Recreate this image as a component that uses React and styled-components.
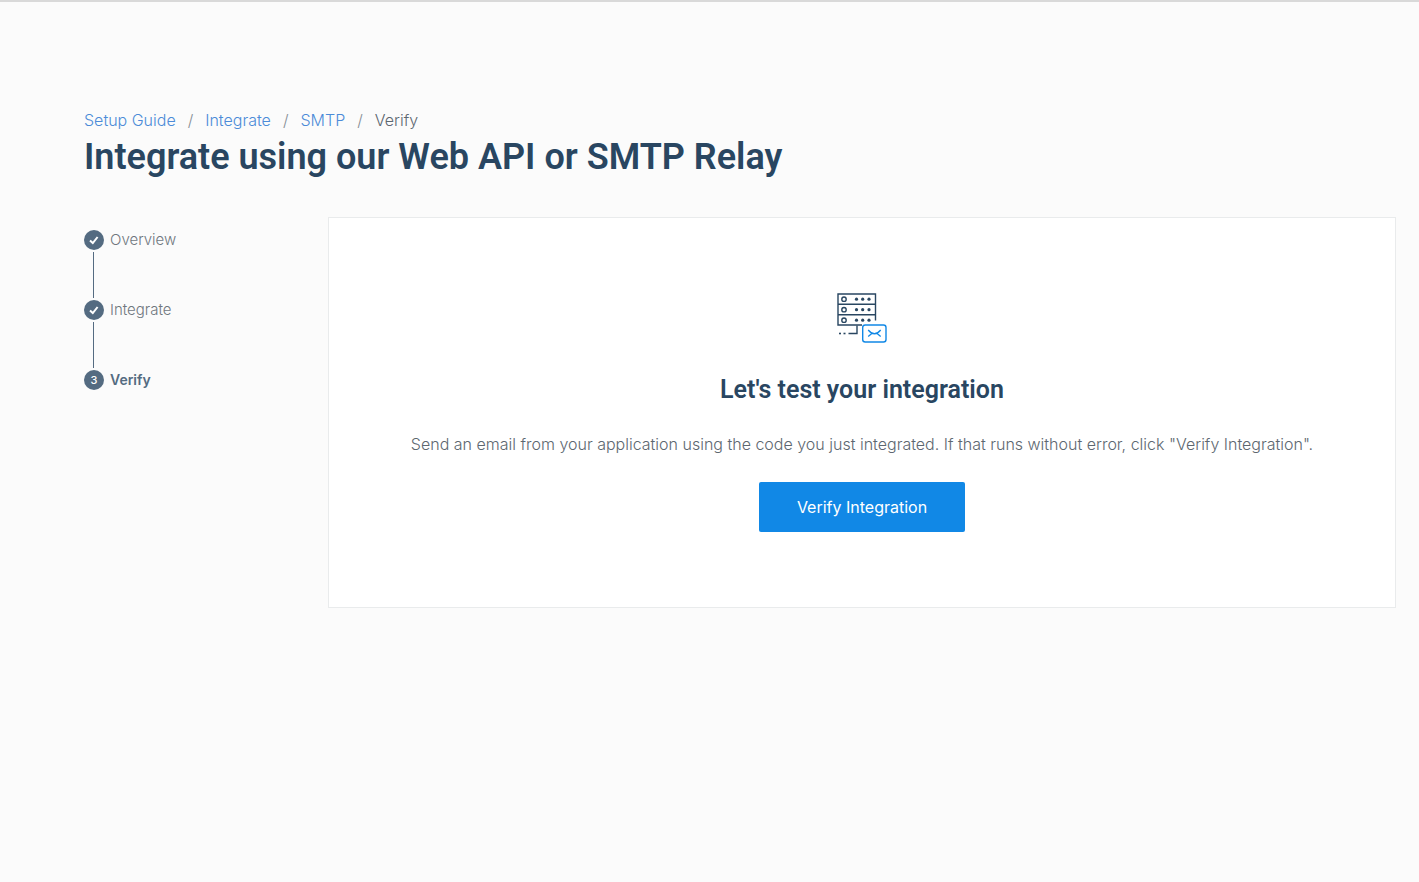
import React, { Component } from 'react'
import styled, { createGlobalStyle } from 'styled-components'


// Styled Components

const Globalstyle = createGlobalStyle`
  * {
    box-sizing: border-box;
  }
  body {
    margin: 0;
    background: #fbfbfb;
    color: #5d6770;
    font-family: Inter, Roboto, "Liberation Sans", sans-serif;
    font-size: 16px;
    font-weight: 300;
    line-height: 20px;
  }
`;

const Page = styled.main`
  min-height: 100vh;
  padding: 108px 23px 40px 84px;
  border-top: 2px solid #d9d9d9;
`;

const Crumblist = styled.ol`
  display: flex;
  gap: 12px;
  margin: 0;
  padding: 0;
  list-style: none;
`;

const Crumb = styled.li`
  display: flex;
  gap: 12px;
  &:not(:last-child)::after {
    content: "/";
    color: #868e95;
  }
`;

const Crumblink = styled.a`
  color: #4c8bd8;
  text-decoration: none;
  &:hover {
    text-decoration: underline;
  }
`;

const Title = styled.h1`
  margin: 2px 0 35px;
  color: #294661;
  font-family: Roboto, "Liberation Sans", sans-serif;
  font-size: 36px;
  font-weight: 600;
  line-height: 50px;
`;

const Columns = styled.div`
  display: grid;
  grid-template-columns: 220px 1fr;
  gap: 24px;
  align-items: start;
`;

const Steplist = styled.ol`
  margin: 0;
  padding: 13px 0 0;
  list-style: none;
`;

const Step = styled.li`
  display: grid;
  grid-template-columns: 20px 1fr;
  column-gap: 6px;
  color: ${props => props.$current ? '#546b81' : '#6f777e'};
  font-size: ${props => props.$current ? '14px' : '15px'};
  font-weight: ${props => props.$current ? '600' : '300'};
`;

const Stepmark = styled.span`
  display: flex;
  align-items: center;
  justify-content: center;
  height: 20px;
  border-radius: 50%;
  background: #546b81;
  color: #fff;
  font-size: 11px;
  font-weight: 500;
`;

const Stepline = styled.span`
  width: 1px;
  height: 46px;
  margin: 2px 9px;
  background: #546b81;
`;

const Card = styled.section`
  display: flex;
  flex-direction: column;
  align-items: center;
  padding: 74px 40px 75px;
  border: 1px solid #e9ebec;
  background: #fff;
  text-align: center;
`;

const Cardtitle = styled.h2`
  margin: 30px 0 28px;
  color: #294661;
  font-family: Roboto, "Liberation Sans", sans-serif;
  font-size: 25px;
  font-weight: 600;
  line-height: 32px;
`;

const Cardtext = styled.p`
  margin: 0 0 28px;
`;

const Primarybutton = styled.button`
  height: 50px;
  padding: 0 38px;
  border: 0;
  border-radius: 2px;
  background: #1188e6;
  color: #fff;
  font: inherit;
  font-weight: 400;
  cursor: pointer;
  &:hover, &:focus {
    background: #0f79cd;
  }
`;


// Icons

const Checkicon = () => (
  <svg width="10" height="10" viewBox="0 0 10 10" fill="none" stroke="#fff" strokeWidth="2" aria-hidden="true">
    <path d="M1 5.4 L3.8 8 L8.6 2" />
  </svg>
)

const Servericon = () => (
  <svg width="52" height="52" viewBox="0 0 52 52" fill="none" aria-hidden="true">
    <g stroke="#294661" strokeWidth="1.4">
      <path d="M26 33 H2 V2 H39.5 V28.5" />
      <path d="M2 12.3 H39.5 M2 22.8 H39.5" />
      <path d="M21 33.5 V41.5 H12.5" />
      <circle cx="8" cy="7.2" r="2.2" />
      <circle cx="8" cy="17.7" r="2.2" />
      <circle cx="8" cy="28.2" r="2.2" />
    </g>
    <g fill="#294661">
      {[7.2, 17.7, 28.2].map(y => [20.5, 26.7, 33].map(x => (
        <circle key={`${x}-${y}`} cx={x} cy={y} r="1.6" />
      )))}
      <rect x="3" y="40.7" width="2" height="1.6" />
      <rect x="7.5" y="40.7" width="2" height="1.6" />
    </g>
    <rect x="26.7" y="33" width="23.3" height="17" rx="2.5" fill="#fff" stroke="#1188e6" strokeWidth="1.4" />
    <path d="M32.2 38 Q38.4 45.5 44.7 38 M32.2 44.5 L35.8 41.5 M44.7 44.5 L41.1 41.5" stroke="#1188e6" strokeWidth="1.3" />
  </svg>
)


const crumbs = ['Setup Guide', 'Integrate', 'SMTP']
const steps = ['Overview', 'Integrate', 'Verify']
const currentstep = 2


class App extends Component {
  render() {
    return (
      <Page>
        <Globalstyle />
        <nav aria-label="Breadcrumb">
          <Crumblist>
            {crumbs.map(name => (
              <Crumb key={name}><Crumblink href="#">{name}</Crumblink></Crumb>
            ))}
            <Crumb aria-current="page">Verify</Crumb>
          </Crumblist>
        </nav>
        <Title>Integrate using our Web API or SMTP Relay</Title>
        <Columns>
          <Steplist>
            {steps.map((name, index) => (
              <Step key={name} $current={index === currentstep}>
                <Stepmark>{index < currentstep ? <Checkicon /> : index + 1}</Stepmark>
                <span>{name}</span>
                {index < currentstep && <Stepline />}
              </Step>
            ))}
          </Steplist>
          <Card>
            <Servericon />
            <Cardtitle>Let's test your integration</Cardtitle>
            <Cardtext>Send an email from your application using the code you just integrated. If that runs without error, click "Verify Integration".</Cardtext>
            <Primarybutton type="button">Verify Integration</Primarybutton>
          </Card>
        </Columns>
      </Page>
    );
  }
}

export default App;
